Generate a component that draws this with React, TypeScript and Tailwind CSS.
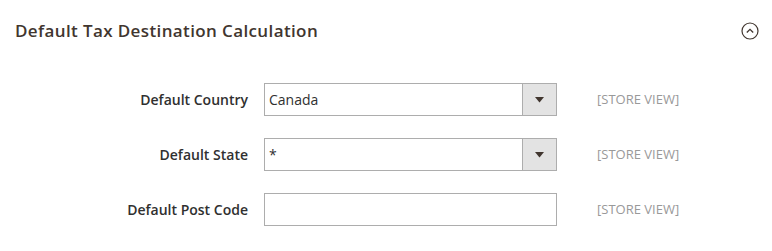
import React from "react";

// Magento-style collapsible config fieldset: tax destination defaults.
const font = { fontFamily: '"Open Sans", "Liberation Sans", sans-serif' };

function ScopeLabel() {
    return <span className="ml-[40px] text-[13px] text-[#999999] leading-none">[STORE VIEW]</span>;
}

function SelectField({ value }: { value: string }) {
    return (
        <div className="flex h-[33px] w-[293px] border border-[#adadad] bg-white">
            <div className="flex-1 flex items-center pl-[4px] text-[14px] text-[#303030]">{value}</div>
            <div className="w-[34px] flex items-center justify-center bg-[#e3e3e3] border-l border-[#adadad]">
                <svg width="9" height="6" viewBox="0 0 9 6">
                    <path d="M0 0 L9 0 L4.5 5.5 Z" fill="#41362f" />
                </svg>
            </div>
        </div>
    );
}

function Row({ label, children }: { label: string; children: React.ReactNode }) {
    return (
        <div className="flex items-center h-[33px]">
            <div className="w-[248px] text-right text-[14px] font-semibold text-[#303030]">{label}</div>
            <div className="ml-[16px]">{children}</div>
            <ScopeLabel />
        </div>
    );
}

export default function App() {
    return (
        <div className="w-[772px] h-[251px] bg-white" style={font}>
            <div className="flex items-center justify-between h-[62px] pl-[15px] pr-[13px]">
                <h2 className="text-[17px] font-semibold text-[#41362f] tracking-[0.38px]">
                    Default Tax Destination Calculation
                </h2>
                <svg width="18" height="18" viewBox="0 0 18 18">
                    <circle cx="9" cy="9" r="8" fill="none" stroke="#41362f" strokeWidth="1.2" />
                    <path d="M5.8 10.5 L9 7.3 L12.2 10.5" fill="none" stroke="#41362f" strokeWidth="1.3" />
                </svg>
            </div>
            <div className="flex flex-col gap-[22px] pt-[21px]">
                <Row label="Default Country">
                    <SelectField value="Canada" />
                </Row>
                <Row label="Default State">
                    <SelectField value="*" />
                </Row>
                <Row label="Default Post Code">
                    <div className="h-[33px] w-[293px] border border-[#adadad] bg-white" />
                </Row>
            </div>
        </div>
    );
}
